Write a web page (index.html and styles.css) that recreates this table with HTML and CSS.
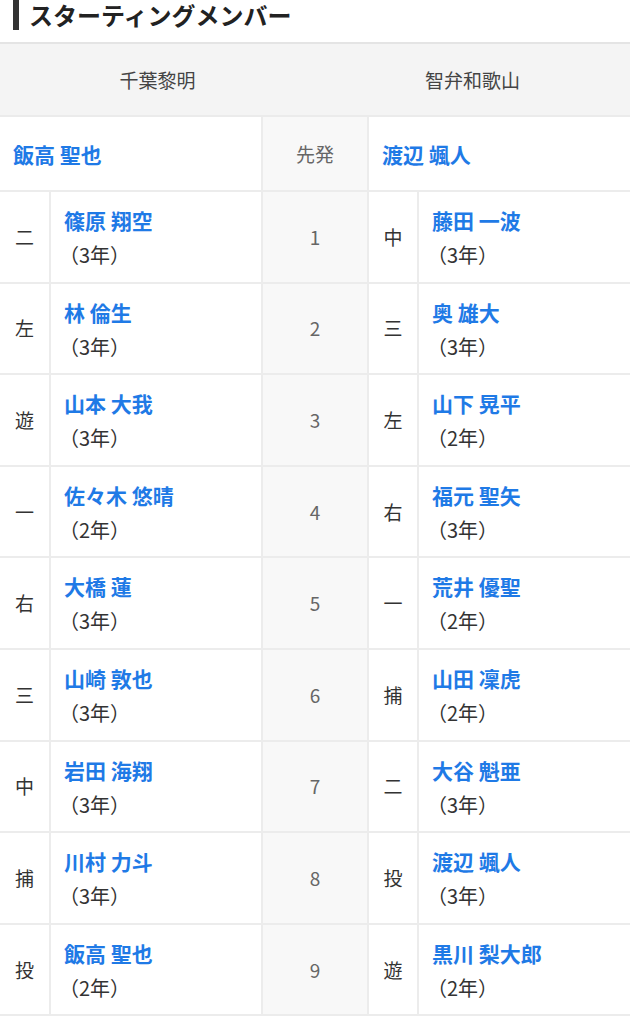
FILE: index.html
```html
<!DOCTYPE html>
<html lang="ja">
<head>
  <meta charset="UTF-8" />
  <title>スターティングメンバー</title>
  <link rel="stylesheet" href="styles.css">
</head>
<body>

<h2 class="section-title">スターティングメンバー</h2>

<div class="teams">
  <div class="team">千葉黎明</div>
  <div class="team">智弁和歌山</div>
</div>

<table class="lineup">
  <colgroup>
    <col class="c-pos">
    <col class="c-name">
    <col class="c-order">
    <col class="c-pos">
    <col>
  </colgroup>
  <tbody>
    <tr class="pitchers">
      <td colspan="2" class="name"><a href="#">飯高 聖也</a></td>
      <td class="order">先発</td>
      <td colspan="2" class="name"><a href="#">渡辺 颯人</a></td>
    </tr>
    <tr>
      <td class="pos">二</td>
      <td class="name"><a href="#">篠原 翔空</a><span class="grade">（3年）</span></td>
      <td class="order">1</td>
      <td class="pos">中</td>
      <td class="name"><a href="#">藤田 一波</a><span class="grade">（3年）</span></td>
    </tr>
    <tr>
      <td class="pos">左</td>
      <td class="name"><a href="#">林 倫生</a><span class="grade">（3年）</span></td>
      <td class="order">2</td>
      <td class="pos">三</td>
      <td class="name"><a href="#">奥 雄大</a><span class="grade">（3年）</span></td>
    </tr>
    <tr>
      <td class="pos">遊</td>
      <td class="name"><a href="#">山本 大我</a><span class="grade">（3年）</span></td>
      <td class="order">3</td>
      <td class="pos">左</td>
      <td class="name"><a href="#">山下 晃平</a><span class="grade">（2年）</span></td>
    </tr>
    <tr>
      <td class="pos">一</td>
      <td class="name"><a href="#">佐々木 悠晴</a><span class="grade">（2年）</span></td>
      <td class="order">4</td>
      <td class="pos">右</td>
      <td class="name"><a href="#">福元 聖矢</a><span class="grade">（3年）</span></td>
    </tr>
    <tr>
      <td class="pos">右</td>
      <td class="name"><a href="#">大橋 蓮</a><span class="grade">（3年）</span></td>
      <td class="order">5</td>
      <td class="pos">一</td>
      <td class="name"><a href="#">荒井 優聖</a><span class="grade">（2年）</span></td>
    </tr>
    <tr>
      <td class="pos">三</td>
      <td class="name"><a href="#">山崎 敦也</a><span class="grade">（3年）</span></td>
      <td class="order">6</td>
      <td class="pos">捕</td>
      <td class="name"><a href="#">山田 凜虎</a><span class="grade">（2年）</span></td>
    </tr>
    <tr>
      <td class="pos">中</td>
      <td class="name"><a href="#">岩田 海翔</a><span class="grade">（3年）</span></td>
      <td class="order">7</td>
      <td class="pos">二</td>
      <td class="name"><a href="#">大谷 魁亜</a><span class="grade">（3年）</span></td>
    </tr>
    <tr>
      <td class="pos">捕</td>
      <td class="name"><a href="#">川村 力斗</a><span class="grade">（3年）</span></td>
      <td class="order">8</td>
      <td class="pos">投</td>
      <td class="name"><a href="#">渡辺 颯人</a><span class="grade">（3年）</span></td>
    </tr>
    <tr>
      <td class="pos">投</td>
      <td class="name"><a href="#">飯高 聖也</a><span class="grade">（2年）</span></td>
      <td class="order">9</td>
      <td class="pos">遊</td>
      <td class="name"><a href="#">黒川 梨大郎</a><span class="grade">（2年）</span></td>
    </tr>
  </tbody>
</table>

</body>
</html>
```

FILE: styles.css
```css
body {
  font-family: "Noto Sans CJK JP", "Noto Sans", sans-serif;
  background-color: white;
  color: #333;
  margin: 0;
  padding: 0;
}

.section-title {
  margin: 0 0 12px 13px;
  padding-left: 10px;
  border-left: 6px solid #333;
  font-size: 24px;
  line-height: 30px;
  font-weight: bold;
  color: #222;
}

.teams {
  display: flex;
  background-color: #f4f4f4;
  border-top: 2px solid #e4e4e4;
  border-bottom: 2px solid #ebebeb;
}

.team {
  flex: 1;
  text-align: center;
  font-size: 19px;
  line-height: 71px;
  color: #444;
}

.lineup {
  width: 100%;
  table-layout: fixed;
  border-collapse: collapse;
}

.c-pos {
  width: 50px;
}

.c-name {
  width: 212px;
}

.c-order {
  width: 106px;
}

.lineup td {
  border: 2px solid #ececec;
  padding: 11px 13px 9.6px;
  font-size: 21px;
  line-height: 34px;
  vertical-align: middle;
}

.lineup tr td:first-child {
  border-left: none;
}

.lineup tr td:last-child {
  border-right: none;
}

.lineup .pitchers td {
  border-top: none;
  padding-top: 19.5px;
  padding-bottom: 19.5px;
}

.lineup td.pos {
  padding: 0;
  text-align: center;
  font-size: 19px;
}

.lineup td.order {
  padding: 0;
  text-align: center;
  background-color: #f8f8f8;
  color: #666;
  font-size: 19px;
}

.lineup td.name a {
  display: block;
  color: #1f7ae6;
  font-weight: bold;
  text-decoration: none;
}

.grade {
  display: block;
  margin-top: 1px;
  margin-left: -5px;
  color: #333;
  font-size: 20px;
}
```
